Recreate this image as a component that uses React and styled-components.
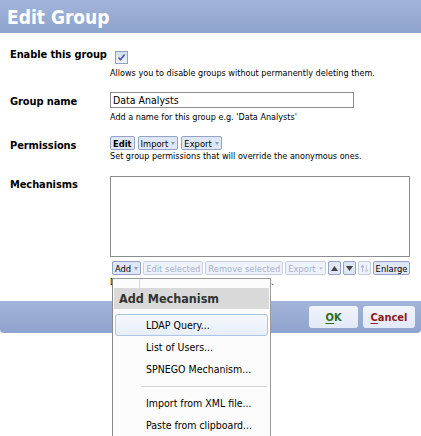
import React from 'react';
import styled, {createGlobalStyle, css} from 'styled-components';

const GlobalStyle = createGlobalStyle`
    body {
        margin: 0;
        background: #fff;
        font-family: "DejaVu Sans Condensed", "DejaVu Sans", sans-serif;
        color: #000;
    }
`;

const Page = styled.div`
    position: relative;
    width: 421px;
    height: 436px;
    overflow: hidden;
`;

const barGradient = css`
    background: linear-gradient(to bottom, #a2b4d9 0%, #8ea3cd 100%);
`;

const Header = styled.div`
    ${barGradient}
    height: 33px;
    padding-left: 7px;
    display: flex;
    align-items: center;
`;

const Title = styled.h1`
    margin: 0;
    padding-top: 1px;
    font-size: 19px;
    font-weight: bold;
    color: #fff;
`;

const Body = styled.div`
    display: flex;
    flex-direction: column;
    gap: 12px;
    padding: 12px 0 12px;
`;

const Field = styled.div`
    display: grid;
    grid-template-columns: 110px 1fr;
`;

const Label = styled.div`
    padding: 2px 0 0 10px;
    font-size: 11px;
    font-weight: bold;
    line-height: 16px;
    letter-spacing: -0.1px;
`;

const Control = styled.div`
    display: flex;
    flex-direction: column;
    align-items: flex-start;
    padding-top: ${({$top}) => $top || 0}px;
`;

const Help = styled.div`
    font-size: 9px;
    line-height: 13px;
    margin-top: ${({$gap}) => $gap || 0}px;
    white-space: nowrap;
`;

const Check = styled.span`
    display: inline-flex;
    align-items: center;
    justify-content: center;
    width: 11px;
    height: 11px;
    margin-left: 5px;
    border: 1px solid #8da1c4;
    background: linear-gradient(to bottom, #d4dcec, #eef2f9);
`;

const TextInput = styled.div`
    box-sizing: border-box;
    width: 244px;
    height: 16px;
    border: 1px solid #8e8e8e;
    padding-left: 2px;
    font-size: 10.5px;
    line-height: 14px;
`;

const Buttons = styled.div`
    display: flex;
    gap: ${({$gap}) => $gap || 3}px;
    margin-top: ${({$top}) => $top || 0}px;
    margin-left: ${({$left}) => $left || 0}px;
`;

const SmallButton = styled.span`
    box-sizing: border-box;
    display: inline-flex;
    align-items: center;
    gap: 3px;
    height: 14px;
    padding: 0 2px;
    font-size: 9.3px;
    font-weight: ${({$bold}) => ($bold ? 'bold' : 'normal')};
    border: 1px solid ${({$off}) => ($off ? '#c5cee2' : '#93a3c6')};
    border-radius: 2px;
    background: ${({$off}) => ($off ? '#eef2fa' : '#dfe7f6')};
    color: ${({$off}) => ($off ? '#a5b1ca' : '#000')};
    white-space: nowrap;
`;

const Caret = styled.span`
    width: 0;
    height: 0;
    border-left: 2.5px solid transparent;
    border-right: 2.5px solid transparent;
    border-top: 3px solid ${({$off}) => ($off ? '#c2cbdd' : '#8c9ab6')};
`;

const IconButton = styled(SmallButton)`
    width: 13px;
    padding: 0;
    justify-content: center;
`;

const ListBox = styled.div`
    box-sizing: border-box;
    width: 300px;
    height: 81px;
    margin-top: 1px;
    border: 1px solid #8e8e8e;
`;

const Footer = styled.div`
    ${barGradient}
    height: 32px;
    border-radius: 0 0 4px 4px;
    display: flex;
    justify-content: flex-end;
    align-items: center;
    gap: 5px;
    padding-right: 6px;
`;

const DialogButton = styled.span`
    display: inline-flex;
    align-items: center;
    justify-content: center;
    width: ${({$w}) => $w}px;
    height: 22px;
    border-radius: 3px;
    background: linear-gradient(to bottom, #f0f4fc, #e2e9f7);
    font-size: 11px;
    font-weight: bold;
    color: ${({$tone}) => $tone};

    u {
        text-decoration: underline;
        text-underline-offset: 2px;
    }
`;

const Menu = styled.div`
    position: absolute;
    left: 112px;
    top: 278px;
    width: 159px;
    height: 170px;
    box-sizing: border-box;
    border: 1px solid #9a9a9a;
    border-left-color: #888;
    background: #fcfcfc;
`;

const MenuTop = styled.div`
    height: 9px;
    width: 26px;
    border-right: 1px solid #d8d8d8;
`;

const MenuHeading = styled.div`
    margin: 0 1px;
    height: 21px;
    padding-left: 5px;
    background: #d9d9d9;
    font-size: 12.5px;
    font-weight: bold;
    color: #333;
    line-height: 21px;
`;

const MenuList = styled.div`
    display: flex;
    flex-direction: column;
    padding-top: 5px;
`;

const MenuItem = styled.div`
    box-sizing: border-box;
    height: 22px;
    margin: 0 2px;
    padding-left: 30px;
    font-size: 10.5px;
    line-height: 20px;
    border: 1px solid transparent;
    border-radius: 3px;
    ${({$hover}) => $hover && css`
        border-color: #aec4e4;
        background: linear-gradient(to bottom, #f5f8fd, #e7eef9);
    `}
`;

const MenuSeparator = styled.div`
    height: 1px;
    margin: 6px 3px 5px 28px;
    background: #d4d4d4;
`;

const CheckMark = () => (
    <svg width="9" height="9" viewBox="0 0 9 9">
        <path d="M1.5 4.5 L3.5 6.8 L7.6 1.6" fill="none" stroke="#4a5fa0" strokeWidth="1.6" />
    </svg>
);

const Arrow = ({up}) => (
    <svg width="7" height="5" viewBox="0 0 7 5">
        <path d={up ? 'M0 5 L3.5 0 L7 5 Z' : 'M0 0 L3.5 5 L7 0 Z'} fill="#444" />
    </svg>
);

const SortIcon = () => (
    <svg width="9" height="9" viewBox="0 0 9 9">
        <path d="M2.5 8 V1.5 M0.8 3.4 L2.5 1.3 L4.2 3.4" fill="none" stroke="#b3bdd3" strokeWidth="1.1" />
        <path d="M6.5 1 V7.5 M4.8 5.6 L6.5 7.7 L8.2 5.6" fill="none" stroke="#c8d0e0" strokeWidth="1.1" />
    </svg>
);

const mechanisms = [
    'LDAP Query...',
    'List of Users...',
    'SPNEGO Mechanism...',
    null,
    'Import from XML file...',
    'Paste from clipboard...'
];

export default function App() {
    return (
        <Page>
            <GlobalStyle />
            <Header>
                <Title>Edit Group</Title>
            </Header>
            <Body>
                <Field>
                    <Label>Enable this group</Label>
                    <Control $top={6}>
                        <Check><CheckMark /></Check>
                        <Help $gap={3}>Allows you to disable groups without permanently deleting them.</Help>
                    </Control>
                </Field>
                <Field>
                    <Label>Group name</Label>
                    <Control>
                        <TextInput>Data Analysts</TextInput>
                        <Help $gap={3}>Add a name for this group e.g. 'Data Analysts'</Help>
                    </Control>
                </Field>
                <Field>
                    <Label>Permissions</Label>
                    <Control>
                        <Buttons>
                            <SmallButton $bold>Edit</SmallButton>
                            <SmallButton>Import <Caret /></SmallButton>
                            <SmallButton>Export <Caret /></SmallButton>
                        </Buttons>
                        <Help>Set group permissions that will override the anonymous ones.</Help>
                    </Control>
                </Field>
                <Field>
                    <Label>Mechanisms</Label>
                    <Control>
                        <ListBox />
                        <Buttons $top={4} $gap={2} $left={2}>
                            <SmallButton>Add <Caret /></SmallButton>
                            <SmallButton $off>Edit selected</SmallButton>
                            <SmallButton $off>Remove selected</SmallButton>
                            <SmallButton $off>Export <Caret $off /></SmallButton>
                            <IconButton><Arrow up /></IconButton>
                            <IconButton><Arrow /></IconButton>
                            <IconButton $off><SortIcon /></IconButton>
                            <SmallButton>Enlarge</SmallButton>
                        </Buttons>
                        <Help $gap={1}>Decide which users are group members.</Help>
                    </Control>
                </Field>
            </Body>
            <Footer>
                <DialogButton $w={49} $tone="#2f6a1f"><span><u>O</u>K</span></DialogButton>
                <DialogButton $w={52} $tone="#8c1b1b"><span><u>C</u>ancel</span></DialogButton>
            </Footer>
            <Menu>
                <MenuTop />
                <MenuHeading>Add Mechanism</MenuHeading>
                <MenuList>
                    {mechanisms.map((item, i) => (item ? (
                        <MenuItem key={item} $hover={i === 0}>{item}</MenuItem>
                    ) : (
                        <MenuSeparator key={`sep-${i}`} />
                    )))}
                </MenuList>
            </Menu>
        </Page>
    );
}
